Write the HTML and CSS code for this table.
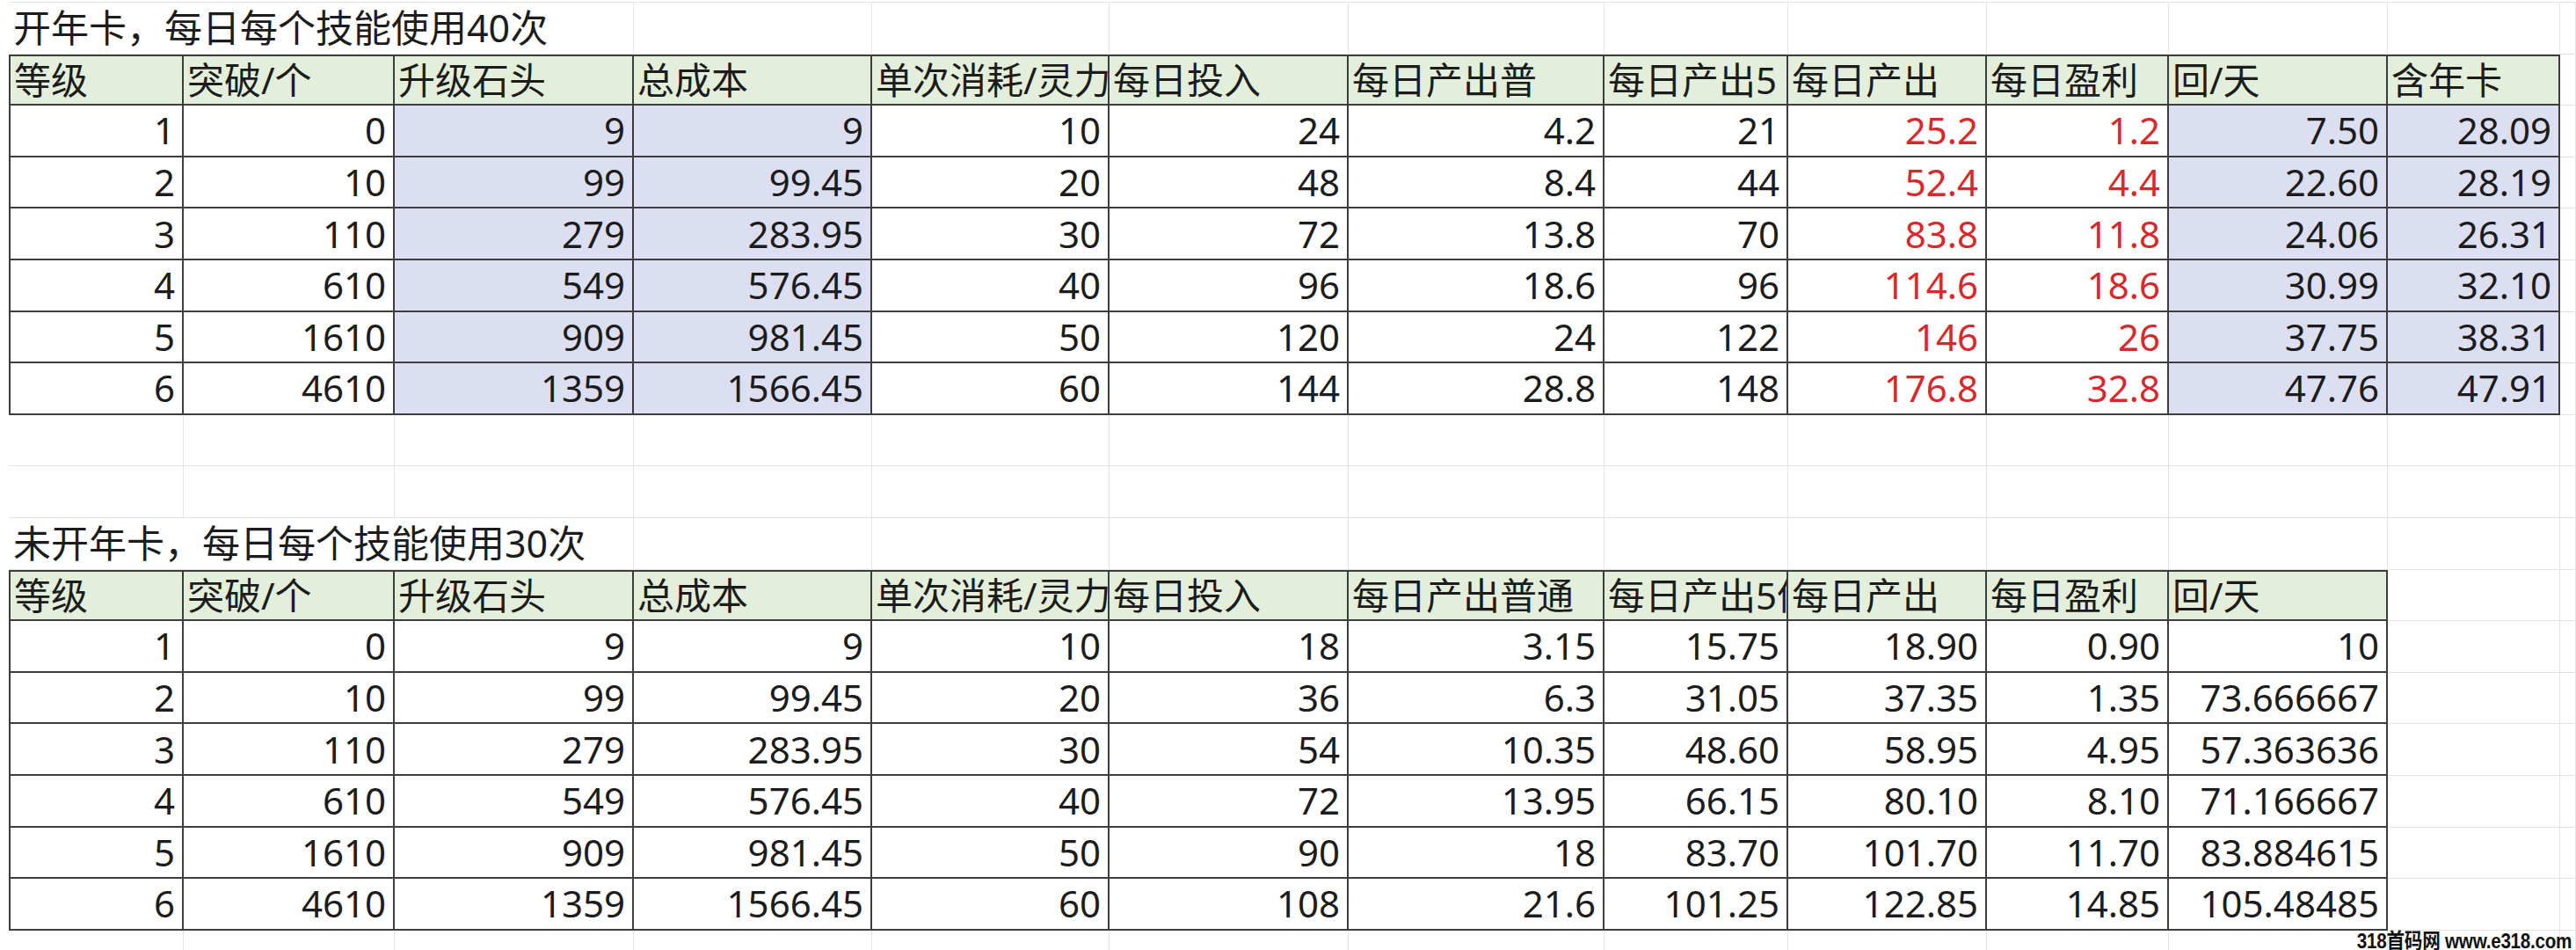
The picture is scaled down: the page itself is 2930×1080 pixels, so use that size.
FILE: index.html
```html
<!DOCTYPE html>
<html lang="zh-CN">
<head>
<meta charset="utf-8">
<title>技能收益表</title>
<link rel="stylesheet" href="styles.css">
</head>
<body>
<div class="sheet">
  <div class="row">
    <div class="c g title span3">开年卡，每日每个技能使用40次</div>
    <div class="c g"></div><div class="c g"></div><div class="c g"></div><div class="c g"></div><div class="c g"></div><div class="c g"></div><div class="c g"></div><div class="c g"></div><div class="c g"></div><div class="c g"></div>
  </div>
  <div class="row">
    <div class="c t h first">等级</div><div class="c t h">突破/个</div><div class="c t h">升级石头</div><div class="c t h">总成本</div><div class="c t h">单次消耗/灵力</div><div class="c t h">每日投入</div><div class="c t h">每日产出普</div><div class="c t h">每日产出5</div><div class="c t h">每日产出</div><div class="c t h">每日盈利</div><div class="c t h">回/天</div><div class="c t h">含年卡</div><div class="c g"></div>
  </div>
  <div class="row">
    <div class="c t first">1</div><div class="c t">0</div><div class="c t blue">9</div><div class="c t blue">9</div><div class="c t">10</div><div class="c t">24</div><div class="c t">4.2</div><div class="c t">21</div><div class="c t red">25.2</div><div class="c t red">1.2</div><div class="c t blue">7.50</div><div class="c t blue">28.09</div><div class="c g"></div>
  </div>
  <div class="row">
    <div class="c t first">2</div><div class="c t">10</div><div class="c t blue">99</div><div class="c t blue">99.45</div><div class="c t">20</div><div class="c t">48</div><div class="c t">8.4</div><div class="c t">44</div><div class="c t red">52.4</div><div class="c t red">4.4</div><div class="c t blue">22.60</div><div class="c t blue">28.19</div><div class="c g"></div>
  </div>
  <div class="row">
    <div class="c t first">3</div><div class="c t">110</div><div class="c t blue">279</div><div class="c t blue">283.95</div><div class="c t">30</div><div class="c t">72</div><div class="c t">13.8</div><div class="c t">70</div><div class="c t red">83.8</div><div class="c t red">11.8</div><div class="c t blue">24.06</div><div class="c t blue">26.31</div><div class="c g"></div>
  </div>
  <div class="row">
    <div class="c t first">4</div><div class="c t">610</div><div class="c t blue">549</div><div class="c t blue">576.45</div><div class="c t">40</div><div class="c t">96</div><div class="c t">18.6</div><div class="c t">96</div><div class="c t red">114.6</div><div class="c t red">18.6</div><div class="c t blue">30.99</div><div class="c t blue">32.10</div><div class="c g"></div>
  </div>
  <div class="row">
    <div class="c t first">5</div><div class="c t">1610</div><div class="c t blue">909</div><div class="c t blue">981.45</div><div class="c t">50</div><div class="c t">120</div><div class="c t">24</div><div class="c t">122</div><div class="c t red">146</div><div class="c t red">26</div><div class="c t blue">37.75</div><div class="c t blue">38.31</div><div class="c g"></div>
  </div>
  <div class="row">
    <div class="c t first">6</div><div class="c t">4610</div><div class="c t blue">1359</div><div class="c t blue">1566.45</div><div class="c t">60</div><div class="c t">144</div><div class="c t">28.8</div><div class="c t">148</div><div class="c t red">176.8</div><div class="c t red">32.8</div><div class="c t blue">47.76</div><div class="c t blue">47.91</div><div class="c g"></div>
  </div>

  <div class="row">
    <div class="c g"></div><div class="c g"></div><div class="c g"></div><div class="c g"></div><div class="c g"></div><div class="c g"></div><div class="c g"></div><div class="c g"></div><div class="c g"></div><div class="c g"></div><div class="c g"></div><div class="c g"></div><div class="c g"></div>
  </div>
  <div class="row">
    <div class="c g"></div><div class="c g"></div><div class="c g"></div><div class="c g"></div><div class="c g"></div><div class="c g"></div><div class="c g"></div><div class="c g"></div><div class="c g"></div><div class="c g"></div><div class="c g"></div><div class="c g"></div><div class="c g"></div>
  </div>

  <div class="row">
    <div class="c g title span3">未开年卡，每日每个技能使用30次</div>
    <div class="c g"></div><div class="c g"></div><div class="c g"></div><div class="c g"></div><div class="c g"></div><div class="c g"></div><div class="c g"></div><div class="c g"></div><div class="c g"></div><div class="c g"></div>
  </div>
  <div class="row">
    <div class="c t h first">等级</div><div class="c t h">突破/个</div><div class="c t h">升级石头</div><div class="c t h">总成本</div><div class="c t h">单次消耗/灵力</div><div class="c t h">每日投入</div><div class="c t h">每日产出普通</div><div class="c t h">每日产出5倍</div><div class="c t h">每日产出</div><div class="c t h">每日盈利</div><div class="c t h">回/天</div><div class="c g"></div><div class="c g"></div>
  </div>
  <div class="row">
    <div class="c t first">1</div><div class="c t">0</div><div class="c t">9</div><div class="c t">9</div><div class="c t">10</div><div class="c t">18</div><div class="c t">3.15</div><div class="c t">15.75</div><div class="c t">18.90</div><div class="c t">0.90</div><div class="c t">10</div><div class="c g"></div><div class="c g"></div>
  </div>
  <div class="row">
    <div class="c t first">2</div><div class="c t">10</div><div class="c t">99</div><div class="c t">99.45</div><div class="c t">20</div><div class="c t">36</div><div class="c t">6.3</div><div class="c t">31.05</div><div class="c t">37.35</div><div class="c t">1.35</div><div class="c t">73.666667</div><div class="c g"></div><div class="c g"></div>
  </div>
  <div class="row">
    <div class="c t first">3</div><div class="c t">110</div><div class="c t">279</div><div class="c t">283.95</div><div class="c t">30</div><div class="c t">54</div><div class="c t">10.35</div><div class="c t">48.60</div><div class="c t">58.95</div><div class="c t">4.95</div><div class="c t">57.363636</div><div class="c g"></div><div class="c g"></div>
  </div>
  <div class="row">
    <div class="c t first">4</div><div class="c t">610</div><div class="c t">549</div><div class="c t">576.45</div><div class="c t">40</div><div class="c t">72</div><div class="c t">13.95</div><div class="c t">66.15</div><div class="c t">80.10</div><div class="c t">8.10</div><div class="c t">71.166667</div><div class="c g"></div><div class="c g"></div>
  </div>
  <div class="row">
    <div class="c t first">5</div><div class="c t">1610</div><div class="c t">909</div><div class="c t">981.45</div><div class="c t">50</div><div class="c t">90</div><div class="c t">18</div><div class="c t">83.70</div><div class="c t">101.70</div><div class="c t">11.70</div><div class="c t">83.884615</div><div class="c g"></div><div class="c g"></div>
  </div>
  <div class="row">
    <div class="c t first">6</div><div class="c t">4610</div><div class="c t">1359</div><div class="c t">1566.45</div><div class="c t">60</div><div class="c t">108</div><div class="c t">21.6</div><div class="c t">101.25</div><div class="c t">122.85</div><div class="c t">14.85</div><div class="c t">105.48485</div><div class="c g"></div><div class="c g"></div>
  </div>
  <div class="row">
    <div class="c g"></div><div class="c g"></div><div class="c g"></div><div class="c g"></div><div class="c g"></div><div class="c g"></div><div class="c g"></div><div class="c g"></div><div class="c g"></div><div class="c g"></div><div class="c g"></div><div class="c g"></div><div class="c g"></div>
  </div>
</div>
<div class="watermark">318首码网 www.e318.com</div>
</body>
</html>
```
FILE: styles.css
```css
html, body {
  margin: 0;
  padding: 0;
  background: #ffffff;
}
body {
  position: relative;
  width: 2930px;
  height: 1080px;
  overflow: hidden;
  font-family: "Noto Sans", "Noto Sans CJK SC", sans-serif;
  color: #1c1c1c;
}
.sheet {
  margin: 2px 0 0 10px;
  border-top: 1px solid #e4e4e4;
  display: flex;
  flex-direction: column;
}
.row {
  display: grid;
  grid-template-columns: 199px 240px 272px 271px 270px 272px 291px 209px 226px 207px 249px 196px 1fr;
  height: 58.6px;
}
.c {
  box-sizing: border-box;
  display: flex;
  align-items: center;
  justify-content: flex-end;
  font-size: 42px;
  line-height: 1;
  white-space: nowrap;
  min-width: 0;
}
.g {
  border-right: 1px solid #e4e4e4;
  border-bottom: 1px solid #e4e4e4;
}
.t {
  border-right: 2px solid #3d3d3d;
  border-bottom: 2px solid #3d3d3d;
  padding-right: 8px;
}
.t.first {
  border-left: 2px solid #3d3d3d;
}
.t.h {
  border-top: 2px solid #3d3d3d;
  background: #e3efda;
  justify-content: flex-start;
  padding: 0 0 0 4px;
  overflow: hidden;
}
.blue {
  background: #dcdff2;
}
.red {
  color: #d9282c;
}
.title {
  grid-column: span 3;
  justify-content: flex-start;
  padding-left: 5px;
  font-size: 43px;
  overflow: visible;
}
.watermark {
  position: absolute;
  right: 5px;
  top: 1050px;
  font-family: "Liberation Sans", "Noto Sans CJK SC", sans-serif;
  font-weight: 700;
  font-size: 24px;
  letter-spacing: -0.3px;
  color: #111111;
  white-space: nowrap;
  transform: scaleX(0.86);
  transform-origin: right center;
}
```
